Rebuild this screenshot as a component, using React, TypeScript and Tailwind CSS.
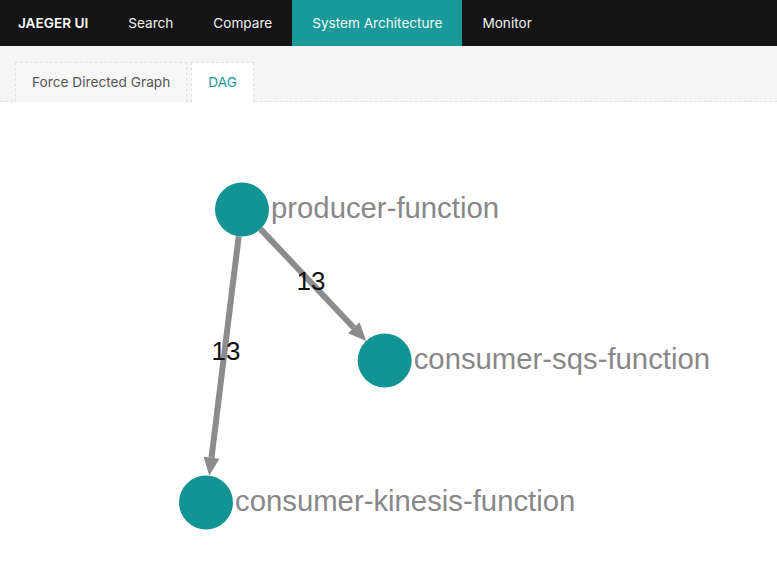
import React from "react";

type Node = { id: string; x: number; y: number };
type Edge = { from: string; to: string; label: string; lx: number; ly: number };

const nodes: Node[] = [
    { id: "producer-function", x: 242, y: 209.5 },
    { id: "consumer-sqs-function", x: 384.7, y: 360.5 },
    { id: "consumer-kinesis-function", x: 206, y: 502.5 },
];

// lx / ly: where the count label sits
const edges: Edge[] = [
    { from: "producer-function", to: "consumer-sqs-function", label: "13", lx: 311, ly: 290 },
    { from: "producer-function", to: "consumer-kinesis-function", label: "13", lx: 226, ly: 360 },
];

const R = 27;
const TOP = 102;

function Arrow({ e }: { e: Edge }) {
    const a = nodes.find((n) => n.id === e.from)!;
    const b = nodes.find((n) => n.id === e.to)!;
    const dx = b.x - a.x;
    const dy = b.y - a.y;
    const len = Math.hypot(dx, dy);
    const ux = dx / len;
    const uy = dy / len;
    const nx = -uy;
    const ny = ux;
    const sx = a.x + R * ux;
    const sy = a.y + R * uy;
    const tx = b.x - R * ux;
    const ty = b.y - R * uy;
    const bx = tx - 18 * ux;
    const by = ty - 18 * uy;
    const pts = `${tx},${ty} ${bx + 8 * nx},${by + 8 * ny} ${bx - 8 * nx},${by - 8 * ny}`;
    return (
        <g>
            <line x1={sx} y1={sy} x2={bx} y2={by} stroke="#8c8c8c" strokeWidth={6} />
            <polygon points={pts} fill="#8c8c8c" />
            <text x={e.lx} y={e.ly} fontSize={26} fill="#111" textAnchor="middle" fontFamily="'Liberation Sans', Arial, sans-serif">
                {e.label}
            </text>
        </g>
    );
}

export default function App() {
    const navItems = ["Search", "Compare", "System Architecture", "Monitor"];

    return (
        <div className="w-[777px] h-[588px] bg-white flex flex-col overflow-hidden font-['Inter',sans-serif]">
            <div className="h-[46px] bg-[#141414] flex flex-row items-stretch text-[13.6px] text-white shrink-0">
                <div className="pl-[18px] pr-5 flex items-center font-semibold">JAEGER UI</div>
                {navItems.map((item) => (
                    <div
                        key={item}
                        className={
                            item === "System Architecture"
                                ? "px-5 flex items-center bg-[#199999] text-[#eef8f8]"
                                : "px-5 flex items-center text-[#f0f0f0]"
                        }
                    >
                        {item}
                    </div>
                ))}
            </div>

            <div className="h-[56px] bg-[#f5f5f5] flex flex-row items-end gap-1 pl-[15px] border-b border-dashed border-[#e2e2e2] shrink-0">
                <div className="h-[40px] px-4 flex items-center border border-b-0 border-dashed border-[#dde3e3] bg-[#f7f7f7] text-[13.7px] text-[#555] -mb-px">
                    Force Directed Graph
                </div>
                <div className="h-[40px] px-4 flex items-center border border-b-0 border-dashed border-[#dde3e3] bg-white text-[13.7px] text-[#199999] -mb-px">
                    DAG
                </div>
            </div>

            <div className="flex-1">
                <svg width={777} height={486} viewBox={`0 ${TOP} 777 486`}>
                    {edges.map((e, i) => (
                        <Arrow key={i} e={e} />
                    ))}
                    {nodes.map((n) => (
                        <g key={n.id}>
                            <circle cx={n.x} cy={n.y} r={R} fill="#139494" />
                            <text
                                x={n.x + 29}
                                y={n.y + 8}
                                fontSize={29.3}
                                fill="#888888"
                                fontFamily="'Liberation Sans', Arial, sans-serif"
                            >
                                {n.id}
                            </text>
                        </g>
                    ))}
                </svg>
            </div>
        </div>
    );
}
